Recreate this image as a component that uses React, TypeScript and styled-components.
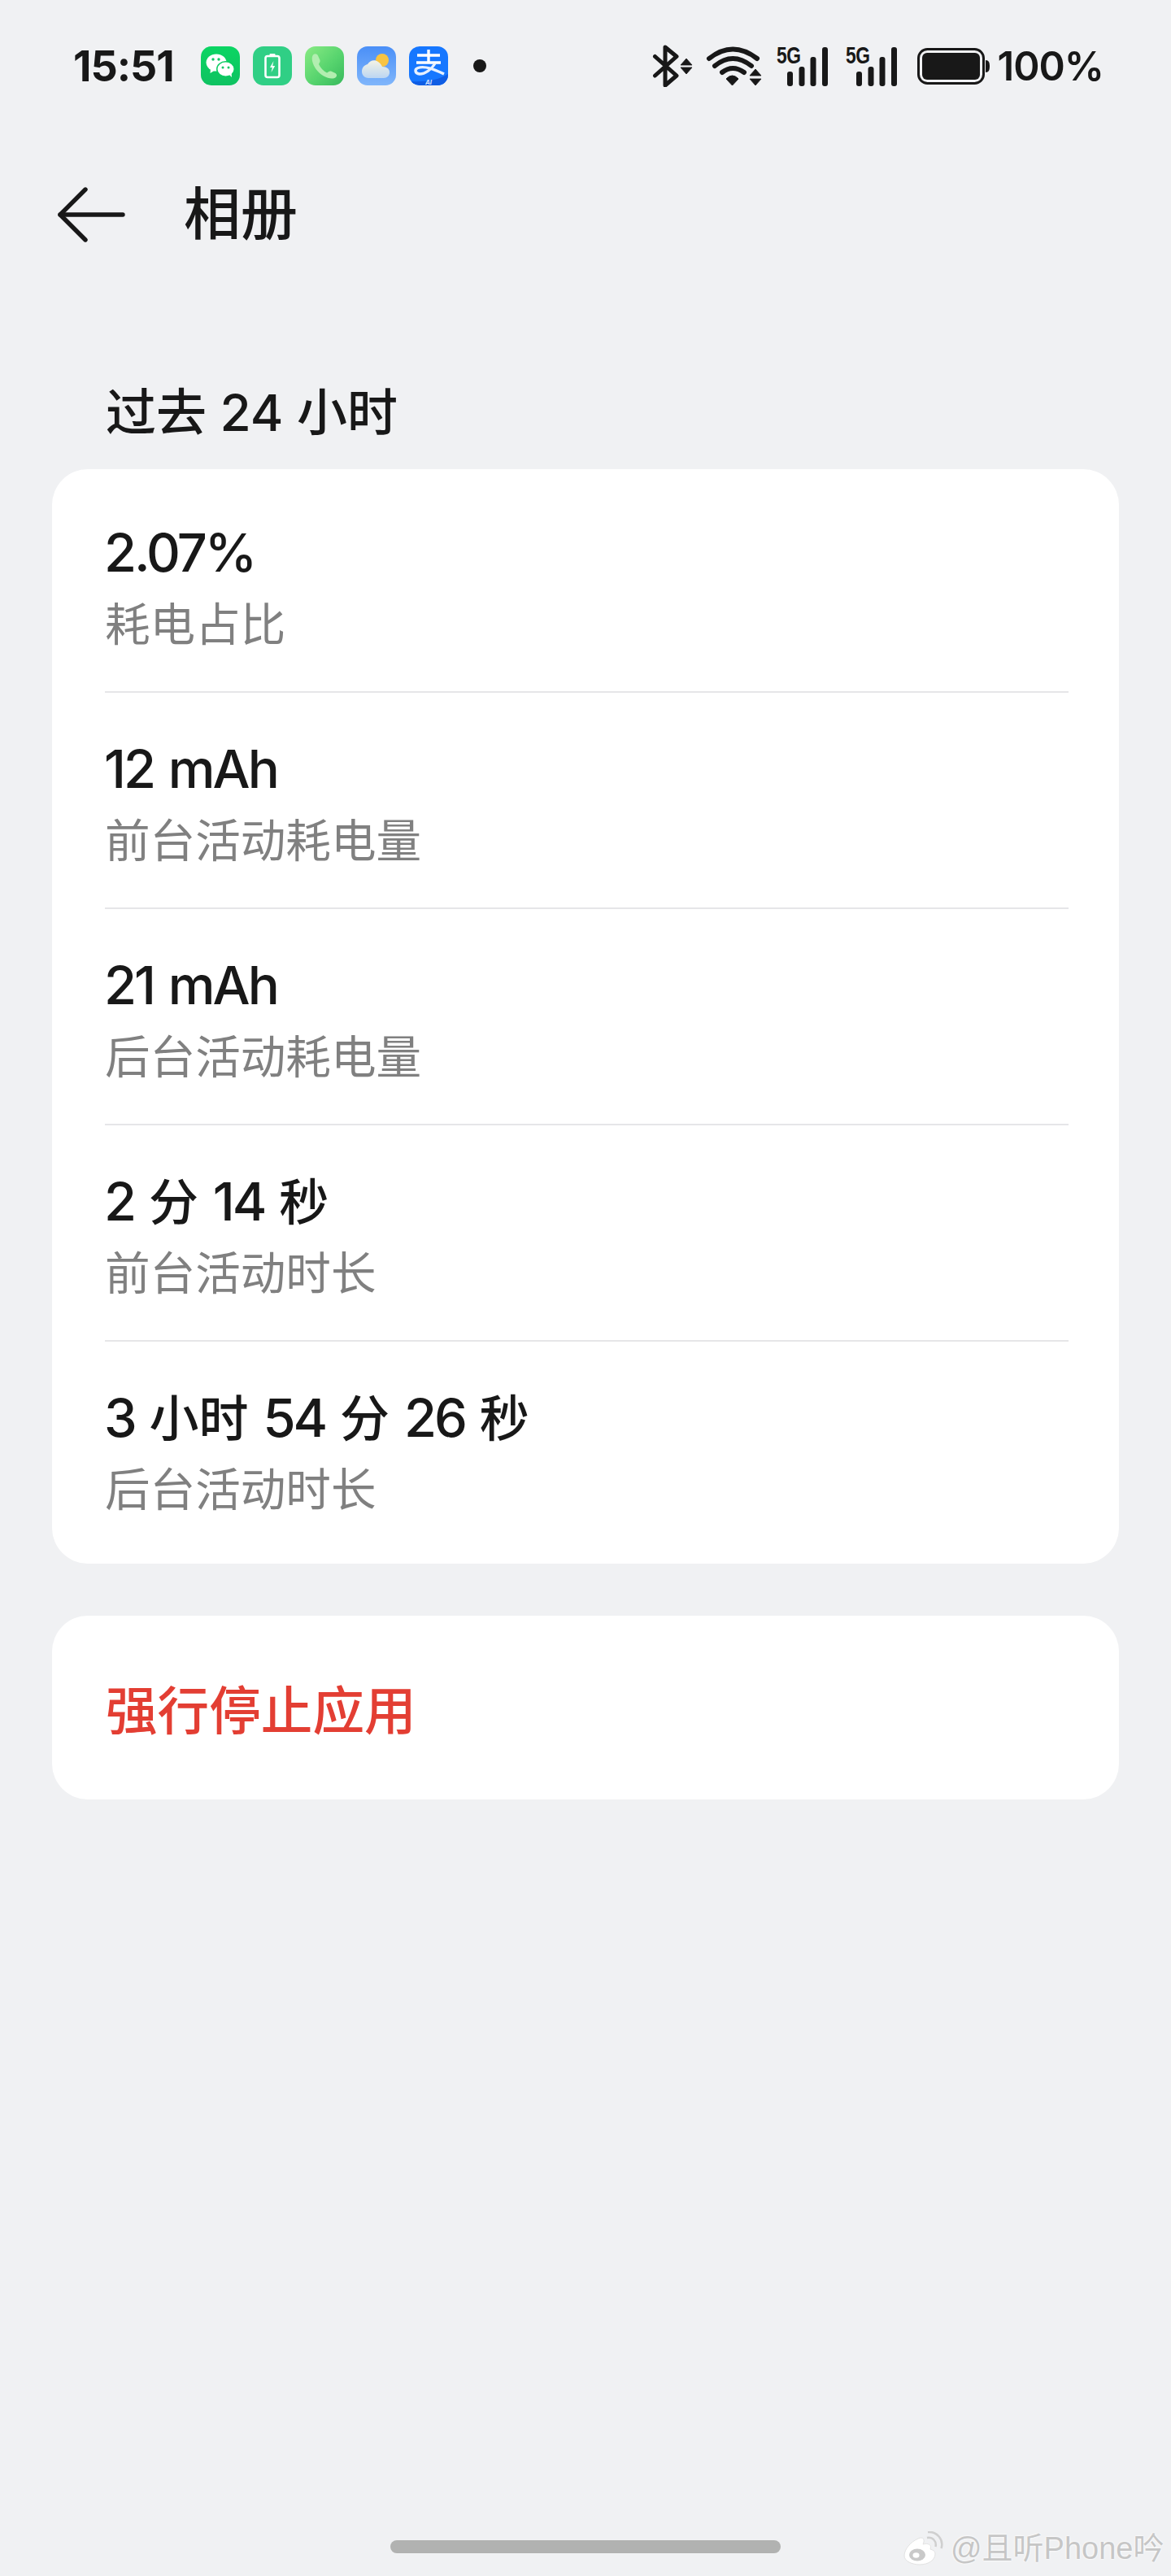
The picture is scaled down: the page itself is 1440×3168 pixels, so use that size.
import React from "react";
import styled, { createGlobalStyle } from "styled-components";

const Global = createGlobalStyle`
  html, body { margin: 0; padding: 0; background: #f0f1f3; }
  body { font-family: Inter, "Noto Sans CJK SC", sans-serif; }
`;

const Page = styled.div`
  width: 1440px;
  height: 3168px;
  background: #f0f1f3;
  color: #181818;
  position: relative;
  overflow: hidden;
  font-family: Inter, "Noto Sans CJK SC", sans-serif;
`;

const StatusBar = styled.div`
  height: 162px;
  padding: 0 83px 0 90px;
  display: flex;
  align-items: center;
  justify-content: space-between;
`;
const StatusLeft = styled.div`
  display: flex;
  align-items: center;
`;
const Clock = styled.span`
  font-size: 52px;
  font-weight: 700;
  letter-spacing: -1px;
  width: 157px;
`;
const AppIcons = styled.div`
  display: flex;
  gap: 16px;
  align-items: center;
`;
const AppIcon = styled.div<{ $bg: string }>`
  width: 48px;
  height: 48px;
  border-radius: 13px;
  background: ${(p) => p.$bg};
  overflow: hidden;
  & > svg { display: block; }
`;
const Dot = styled.span`
  width: 16px;
  height: 16px;
  border-radius: 50%;
  background: #181818;
  margin-left: 31px;
`;
const StatusRight = styled.div`
  display: flex;
  align-items: center;
  & > svg { display: block; flex: none; }
`;
const WifiSlot = styled.div`
  margin-left: 16px;
  & > svg { display: block; }
`;
const BattSlot = styled.div`
  margin-left: 24px;
  & > svg { display: block; }
`;
const Pct = styled.span`
  font-size: 49px;
  font-weight: 600;
  letter-spacing: -1px;
  margin-left: 9px;
`;

const Header = styled.div`
  display: flex;
  align-items: center;
  height: 100px;
  margin-top: 52px;
  padding-left: 70px;
  & > svg { display: block; }
`;
const Title = styled.h1`
  margin: 0 0 0 72px;
  font-size: 70px;
  line-height: 100px;
  font-weight: 500;
`;
const Section = styled.div`
  margin: 152px 0 0 130px;
  line-height: 84px;
  height: 84px;
  font-weight: 500;
  font-size: 62px;
  white-space: pre;
`;
const SectionCjk = styled.span`
  font-size: 62px;
`;
const Card = styled.div`
  margin: 27px 64px 0;
  background: #fff;
  border-radius: 44px;
  padding: 0 64px 0 65px;
`;
const Row = styled.div`
  height: 266px;
  box-sizing: border-box;
  padding-top: 52px;
  margin-right: -2px;
  border-bottom: 2px solid #e6e6e8;
  &:first-child { height: 275px; padding-top: 61px; }
  &:last-child { height: 273px; border-bottom: none; }
`;
const Value = styled.div`
  font-size: 65px;
  line-height: 84px;
  height: 84px;
  margin-left: -1px;
  font-weight: 500;
  letter-spacing: -3px;
  word-spacing: 3.5px;
  white-space: pre;
`;
const ValueCjk = styled.span`
  font-size: 61px;
  letter-spacing: 0;
`;
const Label = styled.div`
  margin-top: 6px;
  font-size: 55.6px;
  line-height: 80px;
  color: #808080;
  font-weight: 400;
`;
const StopCard = styled.div`
  margin: 64px 64px 0;
  height: 226px;
  box-sizing: border-box;
  padding: 0 0 3px 66px;
  background: #fff;
  border-radius: 44px;
  display: flex;
  align-items: center;
  font-size: 63.6px;
  font-weight: 500;
  color: #e33e33;
`;
const HomePill = styled.div`
  position: absolute;
  left: 480px;
  top: 3124px;
  width: 480px;
  height: 16px;
  border-radius: 8px;
  background: #b1b2b1;
`;
const Watermark = styled.div`
  position: absolute;
  left: 1111px;
  top: 3112px;
  display: flex;
  align-items: center;
  gap: 8px;
  font-size: 38px;
  line-height: 44px;
  color: #c6c6c6;
  font-family: "Liberation Sans", "Noto Sans CJK SC", sans-serif;
  white-space: nowrap;
  text-shadow: 0 0 3px #fff, 0 0 2px #fff;
  & > svg { display: block; }
`;

const rows = [
  ["2.07%", "耗电占比"],
  ["12 mAh", "前台活动耗电量"],
  ["21 mAh", "后台活动耗电量"],
  ["2 分 14 秒", "前台活动时长"],
  ["3 小时 54 分 26 秒", "后台活动时长"],
];

const K = "#181818";

const Bt = () => (
  <svg width="50" height="52" viewBox="0 0 50 52" fill="none">
    <path d="M3.5 14.5 L30 38 L16 50 V3 L30 14.5 L3.5 38" stroke={K} strokeWidth="5" strokeLinejoin="round" strokeLinecap="round" />
    <path d="M42 17 L49 25 H35 Z M42 36 L49 28 H35 Z" fill={K} stroke={K} strokeWidth="0.8" strokeLinejoin="round" />
  </svg>
);
const Wifi = () => (
  <WifiSlot>
    <svg width="70" height="52" viewBox="0 0 70 52" fill="none">
      <path d="M4 17 Q33 -6 63 17" stroke={K} strokeWidth="6" strokeLinecap="round" />
      <path d="M11 26 Q33 8 56 26" stroke={K} strokeWidth="6" strokeLinecap="round" />
      <path d="M20 34 Q33 24 47 34" stroke={K} strokeWidth="6" strokeLinecap="round" />
      <path d="M25 42 Q32.5 34 40 42 L32.5 50 Z" fill={K} stroke={K} strokeWidth="1" strokeLinejoin="round" />
      <path d="M61 30 L68 38 H54 Z M61 50 L68 42 H54 Z" fill={K} stroke={K} strokeWidth="0.8" strokeLinejoin="round" />
    </svg>
  </WifiSlot>
);
const FiveG = styled.span`
  position: absolute;
  left: 0;
  top: -2px;
  font-family: "Liberation Sans", sans-serif;
  font-size: 30px;
  line-height: 26px;
  font-weight: 700;
  letter-spacing: -0.5px;
  transform: scaleX(0.76);
  transform-origin: left top;
`;
const Signal = styled.div<{ $gap: number }>`
  position: relative;
  width: 64px;
  height: 49px;
  margin-left: ${(p) => p.$gap}px;
  & > svg { display: block; }
`;
const Sig = ({ gap }: { gap: number }) => (
  <Signal $gap={gap}>
    <FiveG>5G</FiveG>
    <svg width="64" height="49" viewBox="0 0 64 49">
      <rect x="13" y="31" width="7" height="18" rx="3" fill={K} />
      <rect x="27.5" y="25" width="7" height="24" rx="3" fill={K} />
      <rect x="41.5" y="13" width="7" height="36" rx="3" fill={K} />
      <rect x="56" y="1" width="7" height="48" rx="3" fill={K} />
    </svg>
  </Signal>
);
const Batt = () => (
  <BattSlot>
    <svg width="89" height="45" viewBox="0 0 89 45">
      <rect x="1.5" y="1.5" width="80" height="42" rx="11" fill="none" stroke={K} strokeWidth="3" />
      <rect x="6" y="6" width="71" height="33" rx="6" fill={K} />
      <path d="M84 15 C88 15 89 18 89 22.5 C89 27 88 30 84 30 Z" fill={K} />
    </svg>
  </BattSlot>
);

const WeChat = () => (
  <AppIcon $bg="linear-gradient(180deg,#0bd563,#0fc261)">
    <svg width="48" height="48" viewBox="0 0 48 48">
      <ellipse cx="19" cy="20" rx="12.5" ry="10.5" fill="#fff" />
      <path d="M12 27 L11.5 33 L18 29 Z" fill="#fff" />
      <ellipse cx="30.5" cy="28" rx="11.5" ry="10" fill="#0ccb62" />
      <ellipse cx="30.5" cy="28" rx="10" ry="8.5" fill="#fff" />
      <path d="M34 34 L38 38 L37.5 32 Z" fill="#fff" />
      <circle cx="15" cy="16" r="1.7" fill="#10c964" />
      <circle cx="22" cy="16" r="1.7" fill="#10c964" />
      <circle cx="27" cy="26" r="1.5" fill="#10c964" />
      <circle cx="34" cy="26" r="1.5" fill="#10c964" />
    </svg>
  </AppIcon>
);
const Power = () => (
  <AppIcon $bg="#30cf85">
    <svg width="48" height="48" viewBox="0 0 48 48" fill="none">
      <rect x="15.5" y="12" width="17" height="26" rx="2.5" stroke="#fff" strokeWidth="2.6" />
      <rect x="20.5" y="9" width="7" height="4" rx="1" fill="#fff" />
      <path d="M25.5 18 L21 26 H23.8 L22.5 32 L27.2 24 H24.2 Z" fill="#fff" />
    </svg>
  </AppIcon>
);
const Phone = () => (
  <AppIcon $bg="linear-gradient(135deg,#8aeb84 0%,#57d46e 55%,#37b95c 100%)">
    <svg width="48" height="48" viewBox="0 0 48 48">
      <path d="M10 10.5 C12 8.5 15 9 16 11.5 L18.5 17 C19 19 17.5 20.5 17 22 C19 26.5 23 30.5 27 32.5 C28.5 31.5 30 30 32 30.5 L37.5 33 C39.5 34.5 39.5 36.5 38 38 C35 40.5 29 40 23 36.5 C15.5 32 10.5 25 9 18 C8.5 15 8.5 12.5 10 10.5 Z" fill="#b2eeb0" />
    </svg>
  </AppIcon>
);
const Weather = () => (
  <AppIcon $bg="linear-gradient(180deg,#4a8ff7 0%,#80b6fb 100%)">
    <svg width="48" height="48" viewBox="0 0 48 48">
      <defs>
        <linearGradient id="cloudFill" x1="0" y1="0" x2="0" y2="1">
          <stop offset="0" stopColor="#f4f3e6" />
          <stop offset="1" stopColor="#bcd6f2" />
        </linearGradient>
      </defs>
      <circle cx="31" cy="17" r="8" fill="#f8c443" />
      <path d="M14 39 C9 39 6 35 6 31 C6 26 9 23 13 22 C16 17 22 16 26 19 C29 21 30 23 31 25 C37 25 40 28 40 32 C40 36 37 39 33 39 Z" fill="url(#cloudFill)" />
    </svg>
  </AppIcon>
);
const Alipay = () => (
  <AppIcon $bg="#1677ff">
    <svg width="48" height="48" viewBox="0 0 48 48" fill="none">
      <path d="M0 43 C18 44 36 42 48 34 V48 H0 Z" fill="#0f5de4" />
      <path d="M10 11 H38 M24 4 V20 M9 20 H39" stroke="#fff" strokeWidth="3.4" />
      <path d="M32 21 C28 28 20 34 13 34 C7 33.5 6.5 28 11 26.5 C20 23.5 32 29 43 34" stroke="#e6f0ff" strokeWidth="3.4" />
      <text x="24" y="46.5" textAnchor="middle" fontSize="8" fontWeight="700" fontStyle="italic" fontFamily="Inter, sans-serif" fill="#cfe0ff">AI</text>
    </svg>
  </AppIcon>
);

const Back = () => (
  <svg width="84" height="68" viewBox="0 0 84 68" fill="none">
    <path d="M35 3 L4 34 L35 65" stroke={K} strokeWidth="5.4" strokeLinecap="round" strokeLinejoin="round" />
    <path d="M4 34 H81" stroke={K} strokeWidth="5.4" strokeLinecap="round" />
  </svg>
);

const Weibo = () => (
  <svg width="50" height="42" viewBox="0 0 50 42">
    <path d="M18 9 C9 13 1 22 1 30 C1 37 11 41 20 41 C31 41 39 35 39 28 C39 24 36 23 33 22 C35 17 31 14 24 16 C27 10 24 6 18 9 Z" fill="#fff" stroke="#e2e2e2" strokeWidth="1" />
    <ellipse cx="17" cy="29" rx="10" ry="7.5" fill="#c9c9c9" />
    <ellipse cx="15.5" cy="29.5" rx="4" ry="3.2" fill="#fff" />
    <path d="M29 8 C36 7 41 12 39.5 19 M30 1 C41 0 50 10 46.5 21" stroke="#cfcfcf" strokeWidth="2.5" fill="none" />
  </svg>
);

const isCjk = /([\u4e00-\u9fff]+)/;

export default function App() {
  return (
    <Page>
      <Global />
      <StatusBar>
        <StatusLeft>
          <Clock>15:51</Clock>
          <AppIcons>
            <WeChat />
            <Power />
            <Phone />
            <Weather />
            <Alipay />
          </AppIcons>
          <Dot />
        </StatusLeft>
        <StatusRight>
          <Bt />
          <Wifi />
          <Sig gap={17} />
          <Sig gap={21} />
          <Batt />
          <Pct>100%</Pct>
        </StatusRight>
      </StatusBar>
      <Header>
        <Back />
        <Title>相册</Title>
      </Header>
      <Section>
        {"过去 24 小时".split(isCjk).map((t, i) =>
          i % 2 ? <SectionCjk key={i}>{t}</SectionCjk> : t
        )}
      </Section>
      <Card>
        {rows.map(([v, l]) => (
          <Row key={v}>
            <Value>
              {v.split(isCjk).map((t, i) =>
                i % 2 ? <ValueCjk key={i}>{t}</ValueCjk> : t
              )}
            </Value>
            <Label>{l}</Label>
          </Row>
        ))}
      </Card>
      <StopCard>强行停止应用</StopCard>
      <HomePill />
      <Watermark>
        <Weibo />
        <span>@且听Phone吟</span>
      </Watermark>
    </Page>
  );
}
